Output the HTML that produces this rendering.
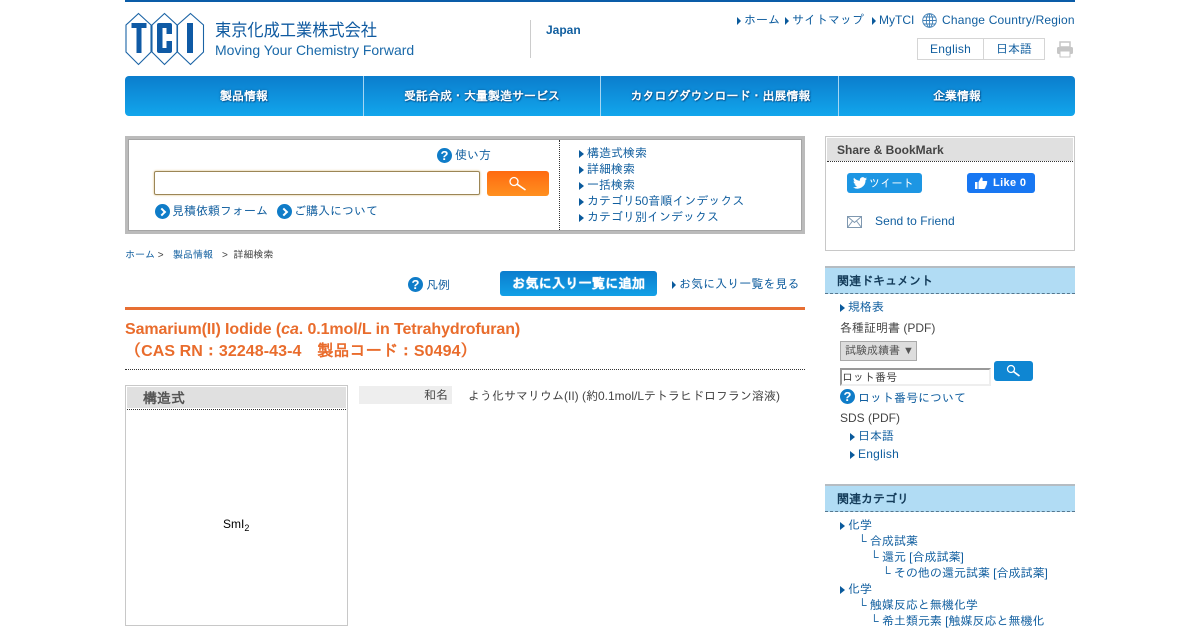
<!DOCTYPE html>
<html lang="ja"><head><meta charset="utf-8"><title>Samarium(II) Iodide</title>
<style>
html,body{margin:0;padding:0;background:#fff;width:1200px;height:630px;overflow:hidden}
body{position:relative;font-family:"Liberation Sans","IPAGothic","Noto Sans CJK JP",sans-serif;font-size:12px;color:#444}
.a,.t{position:absolute}
.t{white-space:nowrap;line-height:16px;color:#105e9f}
.k{color:#444}
.ar:before{content:"";display:inline-block;border-left:4px solid #0a5a9c;border-top:4px solid transparent;border-bottom:4px solid transparent;margin-right:3px;vertical-align:-0.5px}
.b:before{border-left-width:5px;margin-right:3px}
.n{position:absolute;top:76px;height:40px;line-height:40px;text-align:center;color:#fff;font-weight:bold;text-shadow:0 0 2px #0a4f88,1px 1px 1px #0a5f9f}
.q{position:absolute;width:15px;height:15px;border-radius:50%;background:#0f7cc8;color:#fff;font:bold 13px/15px "Liberation Sans",sans-serif;text-align:center}
.g{position:absolute;width:15px;height:15px;border-radius:50%;background:#0f7cc8}
.g:after{content:"";position:absolute;left:4px;top:5px;width:4px;height:4px;border-top:2px solid #fff;border-right:2px solid #fff;transform:rotate(45deg)}
.h{position:absolute;left:825px;width:250px;height:25px;background:#b1dcf4;border-top:2px solid #b5bcc2;border-bottom:1px dashed #55778f;font-weight:bold;color:#143c5a;line-height:27px;text-indent:12px}
</style></head><body>
<div class="a" style="left:125px;top:0;width:950px;height:2px;background:#0a5ca8"></div>

<svg class="a" style="left:125px;top:12px" width="80" height="54" viewBox="0 0 80 54">
<g fill="#fff" stroke="#1a63a5" stroke-width="1.100">
<path d="M13.500 1.500L26 13V40L13.500 52.500L1 40V13Z"/><path d="M39.500 1.500L52 13V40L39.500 52.500L27 40V13Z"/><path d="M65.500 1.500L78.500 13V40L65.500 52.500L52.500 40V13Z"/></g>
<g fill="#0f5aa5"><path d="M6.500 11H21.500V16H16.500V41H11.500V16H6.500Z"/><path d="M34 11H45Q47 11 47 13V22H41.500V16H37.500V36H41.500V29H47V39Q47 41 45 41H34Q32 41 32 39V13Q32 11 34 11Z"/><path d="M62 11H68V41H62Z"/></g></svg>
<div class="t" style="left:215px;top:17px;font-size:17px;line-height:24px;color:#0f5aa0;font-family:'Noto Sans CJK JP',sans-serif;font-weight:400;transform:scaleX(.953);transform-origin:0 0">東京化成工業株式会社</div>
<div class="t" style="left:215px;top:41px;font-size:14px;line-height:18px;color:#1a69a9">Moving Your Chemistry Forward</div>
<div class="a" style="left:530px;top:20px;width:1px;height:38px;background:#ccc"></div>
<div class="t" style="left:546px;top:22px;font-weight:bold">Japan</div>

<div class="t ar" style="left:737px;top:12px">ホーム</div>
<div class="t ar" style="left:785px;top:12px">サイトマップ</div>
<div class="t ar" style="left:872px;top:12px">MyTCI</div>
<svg class="a" style="left:922px;top:13px" width="15" height="15" viewBox="0 0 15 15" fill="none" stroke="#3f7fb5" stroke-width=".9"><circle cx="7.500" cy="7.500" r="6.800"/><ellipse cx="7.500" cy="7.500" rx="3.200" ry="6.800"/><path d="M7.500 .7V14.300M.7 7.500H14.300M1.700 4H13.300M1.700 11H13.300"/></svg>
<div class="t" style="left:942px;top:12px;letter-spacing:.19px">Change Country/Region</div>
<div class="a" style="left:917px;top:38px;width:126px;height:20px;border:1px solid #d5d5d5"></div>
<div class="a" style="left:983px;top:38px;width:1px;height:22px;background:#d5d5d5"></div>
<div class="t" style="left:930px;top:41px;letter-spacing:.25px">English</div>
<div class="t" style="left:996px;top:41px">日本語</div>
<svg class="a" style="left:1056px;top:41px" width="18" height="17" viewBox="0 0 18 17"><rect x="4" y="1" width="10" height="5" fill="#fff" stroke="#c6c6c6" stroke-width="1.500"/><rect x="1" y="6" width="16" height="7" rx="1.500" fill="#c6c6c6"/><rect x="4" y="10" width="10" height="6" fill="#fff" stroke="#c6c6c6"/></svg>

<div class="a" style="left:125px;top:76px;width:950px;height:40px;border-radius:4px;background:linear-gradient(#0b7dcd,#12a6ec)"></div>
<div class="a" style="left:363px;top:76px;width:1px;height:40px;background:#a5d6f3"></div>
<div class="a" style="left:600px;top:76px;width:1px;height:40px;background:#a5d6f3"></div>
<div class="a" style="left:838px;top:76px;width:1px;height:40px;background:#a5d6f3"></div>
<div class="n" style="left:125px;width:238px">製品情報</div>
<div class="n" style="left:364px;width:236px">受託合成・大量製造サービス</div>
<div class="n" style="left:602px;width:237px">カタログダウンロード・出展情報</div>
<div class="n" style="left:839px;width:236px">企業情報</div>

<div class="a" style="left:125px;top:136px;width:680px;height:98px;box-sizing:border-box;border:3px solid #bbb"><div style="height:100%;box-sizing:border-box;border:1px solid #a5a5a5"></div></div>
<div class="a" style="left:559px;top:140px;height:90px;border-left:1px dotted #333"></div>
<div class="q" style="left:437px;top:148px">?</div>
<div class="t" style="left:455px;top:147px">使い方</div>
<div class="a" style="left:154px;top:171px;width:326px;height:24px;box-sizing:border-box;border:1px solid #9c8656;border-radius:2px;box-shadow:0 0 2px #d9b878"></div>
<div class="a" style="left:487px;top:171px;width:62px;height:25px;border-radius:3px;background:linear-gradient(#ff6a10,#ff9020)"></div>
<svg class="a" style="left:508px;top:176px" width="20" height="16" fill="none" stroke="#fff"><circle cx="6" cy="5.500" r="4" stroke-width="1.300"/><path d="M9.300 8.300L17.500 14" stroke-width="1.600"/></svg>
<div class="g" style="left:155px;top:204px"></div>
<div class="t" style="left:172px;top:203px">見積依頼フォーム</div>
<div class="g" style="left:277px;top:204px"></div>
<div class="t" style="left:294px;top:203px">ご購入について</div>
<div class="t ar b" style="left:579px;top:145px">構造式検索</div>
<div class="t ar b" style="left:579px;top:161px">詳細検索</div>
<div class="t ar b" style="left:579px;top:177px">一括検索</div>
<div class="t ar b" style="left:579px;top:193px">カテゴリ50音順インデックス</div>
<div class="t ar b" style="left:579px;top:209px">カテゴリ別インデックス</div>

<div class="t" style="left:125px;top:248px;font-size:10px">ホーム<span class="k"> &gt;</span></div>
<div class="t" style="left:173px;top:248px;font-size:10px">製品情報</div>
<div class="t k" style="left:222px;top:248px;font-size:10px">&gt;&nbsp; 詳細検索</div>
<div class="q" style="left:408px;top:277px">?</div>
<div class="t" style="left:426px;top:277px">凡例</div>
<div class="a" style="left:500px;top:271px;width:157px;height:25px;border-radius:3px;background:linear-gradient(#0b7dcd,#12a0e6);color:#fff;font-weight:bold;text-align:center;line-height:26px;font-size:13.300px;text-shadow:0 0 1px #fff">お気に入り一覧に追加</div>
<div class="t ar" style="left:672px;top:276px;letter-spacing:.05px">お気に入り一覧を見る</div>
<div class="a" style="left:125px;top:307px;width:680px;height:3px;background:#e76f33"></div>
<div class="t" style="left:125px;top:320px;font-size:16px;line-height:20px;font-weight:bold;color:#e96c2c;letter-spacing:-.1px">Samarium(II) Iodide (<i>ca</i>. 0.1mol/L in Tetrahydrofuran)</div>
<div class="t" style="left:125px;top:342px;font-size:16px;line-height:20px;font-weight:bold;color:#e96c2c;letter-spacing:.07px">（CAS RN：32248-43-4　製品コード：S0494）</div>
<div class="a" style="left:125px;top:369px;width:680px;border-top:1px dotted #333"></div>

<div class="a" style="left:125px;top:385px;width:223px;height:241px;box-sizing:border-box;border:1px solid #c8c8c8"></div>
<div class="a" style="left:127px;top:387px;width:219px;height:21px;background:#e0e0e0"></div>
<div class="a" style="left:127px;top:409px;width:219px;border-top:1px dotted #333"></div>
<div class="t k" style="left:143px;top:390px;font-size:14px;font-weight:bold;color:#555">構造式</div>
<div class="t" style="left:223px;top:516px;font-size:12px;color:#000">SmI<sub style="font-size:9px;line-height:0;vertical-align:-3px">2</sub></div>

<div class="a" style="left:359px;top:386px;width:93px;height:18px;background:#eee"></div>
<div class="t k" style="left:359px;top:387px;width:89px;text-align:right">和名</div>
<div class="t k" style="left:468px;top:388px">よう化サマリウム(II) (約0.1mol/Lテトラヒドロフラン溶液)</div>

<div class="a" style="left:825px;top:136px;width:250px;height:115px;box-sizing:border-box;border:1px solid #c8c8c8"></div>
<div class="a" style="left:827px;top:138px;width:246px;height:23px;background:#e0e0e0;color:#444;font-weight:bold;line-height:24px;text-indent:10px">Share &amp; BookMark</div>
<div class="a" style="left:827px;top:161px;width:246px;border-top:1px dotted #333"></div>
<div class="a" style="left:847px;top:173px;width:75px;height:20px;border-radius:3px;background:#1d96e3;color:#fff;font-size:11px;line-height:22px;text-indent:22px;letter-spacing:.25px">ツイート</div>
<svg class="a" style="left:853px;top:177px" width="14" height="12" viewBox="0 0 24 20"><path fill="#fff" d="M24 2.400a9.800 9.800 0 0 1-2.800.8 4.900 4.900 0 0 0 2.200-2.700 9.800 9.800 0 0 1-3.100 1.200 4.900 4.900 0 0 0-8.400 4.500A14 14 0 0 1 1.700 1a4.900 4.900 0 0 0 1.500 6.600 4.900 4.900 0 0 1-2.200-.6 4.900 4.900 0 0 0 3.900 4.900 4.900 4.900 0 0 1-2.200.1 4.900 4.900 0 0 0 4.600 3.400A9.900 9.900 0 0 1 0 17.400 14 14 0 0 0 21.500 5a10 10 0 0 0 2.500-2.600z"/></svg>
<div class="a" style="left:967px;top:173px;width:68px;height:20px;border-radius:3px;background:#1877f2;color:#fff;font-size:11px;font-weight:bold;line-height:21px;text-indent:26px;letter-spacing:.35px">Like 0</div>
<svg class="a" style="left:974px;top:176px" width="14" height="14" viewBox="0 0 14 14"><path fill="#fff" d="M1 6H3.500V13H1ZM4.500 6L7 1.500C8.500 1 9 2.500 8.500 5H12.500C13.500 5 13.500 6.500 12.800 7C13.300 7.800 13 8.700 12.300 9C12.500 10 12 10.500 11.500 10.800C11.500 12 11 13 10 13H4.500Z"/></svg>
<svg class="a" style="left:847px;top:216px" width="15" height="12" viewBox="0 0 15 12" fill="none" stroke="#7f98b0"><rect x=".5" y=".5" width="14" height="11"/><path d="M.5 .5L7.500 6.500L14.500 .5M.5 11.500L5.500 5M14.500 11.500L9.500 5"/></svg>
<div class="t" style="left:875px;top:213px;letter-spacing:.07px">Send to Friend</div>

<div class="h" style="top:266px">関連ドキュメント</div>
<div class="t ar b" style="left:840px;top:299px">規格表</div>
<div class="t k" style="left:840px;top:320px">各種証明書 (PDF)</div>
<div class="a" style="left:840px;top:341px;width:77px;height:20px;box-sizing:border-box;background:#ddd;border:1px solid #aaa;color:#555;font-size:11px;line-height:18px;text-indent:4px;white-space:nowrap">試験成績書 ▼</div>
<div class="a" style="left:840px;top:368px;width:151px;height:18px;box-sizing:border-box;border:2px solid;border-color:#999 #eee #eee #999;color:#444;font-size:11px;line-height:17px;white-space:nowrap">ロット番号</div>
<div class="a" style="left:994px;top:361px;width:39px;height:20px;border-radius:3px;background:#0f86d2"></div>
<svg class="a" style="left:1005px;top:364px" width="16" height="14" fill="none" stroke="#fff"><circle cx="6" cy="5" r="3.500" stroke-width="1.300"/><path d="M8.500 7.500L14.500 12" stroke-width="1.700"/></svg>
<div class="q" style="left:840px;top:389px">?</div>
<div class="t" style="left:858px;top:390px">ロット番号について</div>
<div class="t k" style="left:840px;top:410px">SDS (PDF)</div>
<div class="t ar b" style="left:850px;top:428px">日本語</div>
<div class="t ar b" style="left:850px;top:446px;letter-spacing:.25px">English</div>

<div class="h" style="top:484px">関連カテゴリ</div>
<div class="t ar b" style="left:840px;top:517px">化学</div>
<div class="t" style="left:858px;top:533px">└ 合成試薬</div>
<div class="t" style="left:870px;top:549px">└ 還元 [合成試薬]</div>
<div class="t" style="left:882px;top:565px">└ その他の還元試薬 [合成試薬]</div>
<div class="t ar b" style="left:840px;top:581px">化学</div>
<div class="t" style="left:858px;top:597px">└ 触媒反応と無機化学</div>
<div class="t" style="left:870px;top:613px">└ 希土類元素 [触媒反応と無機化</div>
</body></html>
